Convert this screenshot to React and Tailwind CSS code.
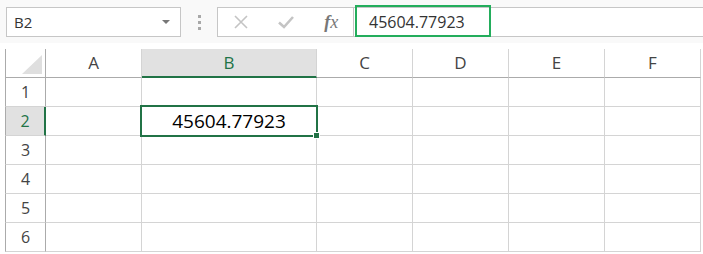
import React from "react";

const cols = [
  { key: "A", w: "w-[96px]" },
  { key: "B", w: "w-[175px]" },
  { key: "C", w: "w-[96px]" },
  { key: "D", w: "w-[96px]" },
  { key: "E", w: "w-[96px]" },
  { key: "F", w: "w-[96px]" },
];

const rows = [1, 2, 3, 4, 5, 6];

const Toolbar = () => (
  <div className="relative flex h-[43px] items-start bg-[#f9f9f9] pt-[7px]">
    {/* name box */}
    <div className="ml-[6px] flex h-[30px] w-[175px] items-center justify-between border border-[#c6c6c6] bg-white pl-[7px] pr-[10px]">
      <span className="text-[15px] text-[#333]">B2</span>
      <svg width="8" height="5" viewBox="0 0 8 5">
        <path d="M0 0 L8 0 L4 4 Z" fill="#777" />
      </svg>
    </div>
    {/* grip */}
    <div className="flex h-[30px] w-[36px] flex-col items-center justify-center gap-[3px]">
      <span className="h-[3px] w-[3px] bg-[#a8a8a8]" />
      <span className="h-[3px] w-[3px] bg-[#a8a8a8]" />
      <span className="h-[3px] w-[3px] bg-[#a8a8a8]" />
    </div>
    {/* formula buttons */}
    <div className="flex h-[30px] w-[137px] items-center border border-[#c6c6c6] bg-white">
      <div className="flex w-[46px] justify-center">
        <svg width="16" height="16" viewBox="0 0 16 16">
          <path d="M2 2 L14 14 M14 2 L2 14" stroke="#c4c4c4" strokeWidth="1.6" fill="none" />
        </svg>
      </div>
      <div className="flex w-[46px] justify-center">
        <svg width="18" height="16" viewBox="0 0 18 16">
          <path d="M2 8.5 L7 13 L16 3" stroke="#c4c4c4" strokeWidth="2.6" fill="none" />
        </svg>
      </div>
      <div className="flex w-[44px] justify-center">
        <span
          className="text-[18px] italic text-[#777]"
          style={{ fontFamily: '"Liberation Serif", "DejaVu Serif", serif' }}
        >
          <span className="font-bold">f</span>x
        </span>
      </div>
    </div>
    {/* formula input */}
    <div className="flex h-[30px] flex-1 items-center border-y border-[#c6c6c6] bg-white pl-[15px]">
      <span className="text-[16px] text-[#333]">45604.77923</span>
    </div>
    {/* highlight box */}
    <div className="absolute left-[355px] top-[5px] h-[32px] w-[136px] border-2 border-[#23ad5c]" />
  </div>
);

const Grid = () => (
  <div className="relative ml-[5px] mt-[6px]">
    {/* header row */}
    <div className="flex h-[29px]">
      <div className="relative h-[29px] w-[41px] border-x border-b border-x-[#ababab] border-b-[#ababab] bg-white">
        <svg className="absolute bottom-[3px] right-[3px]" width="20" height="19" viewBox="0 0 20 19">
          <path d="M20 0 L20 19 L0 19 Z" fill="#dfdfdf" />
        </svg>
      </div>
      {cols.map((c) =>
        c.key === "B" ? (
          <div
            key={c.key}
            className={`${c.w} flex h-[29px] items-center justify-center border-b-2 border-r border-b-[#217346] border-r-[#d4d4d4] bg-[#e1e1e1] text-[17px] text-[#217346]`}
          >
            {c.key}
          </div>
        ) : (
          <div
            key={c.key}
            className={`${c.w} flex h-[29px] items-center justify-center border-b border-r border-b-[#ababab] border-r-[#d4d4d4] bg-white text-[17px] text-[#444]`}
          >
            {c.key}
          </div>
        )
      )}
    </div>
    {rows.map((r) => (
      <div key={r} className="flex h-[29px]">
        {r === 2 ? (
          <div className="flex h-[29px] w-[41px] items-center justify-center border-b border-l border-r-2 border-b-[#d4d4d4] border-l-[#ababab] border-r-[#217346] bg-[#e1e1e1] text-[16px] text-[#217346]">
            {r}
          </div>
        ) : (
          <div className="flex h-[29px] w-[41px] items-center justify-center border-x border-b border-x-[#ababab] border-b-[#d4d4d4] bg-white text-[16px] text-[#444]">
            {r}
          </div>
        )}
        {cols.map((c) => (
          <div
            key={c.key}
            className={`${c.w} flex h-[29px] items-center justify-center border-b border-r border-[#d4d4d4] text-[19px] text-black`}
          >
            {r === 2 && c.key === "B" ? "45604.77923" : ""}
          </div>
        ))}
      </div>
    ))}
    {/* selection */}
    <div className="absolute left-[135px] top-[56px] h-[32px] w-[178px] border-2 border-[#217346]" />
    <div className="absolute left-[308px] top-[83px] h-[7px] w-[7px] border border-white bg-[#217346]" />
  </div>
);

export default function App() {
  return (
    <div
      className="h-[254px] w-[703px] overflow-hidden bg-white"
      style={{ fontFamily: '"Open Sans", "Noto Sans", sans-serif' }}
    >
      <Toolbar />
      <Grid />
    </div>
  );
}
